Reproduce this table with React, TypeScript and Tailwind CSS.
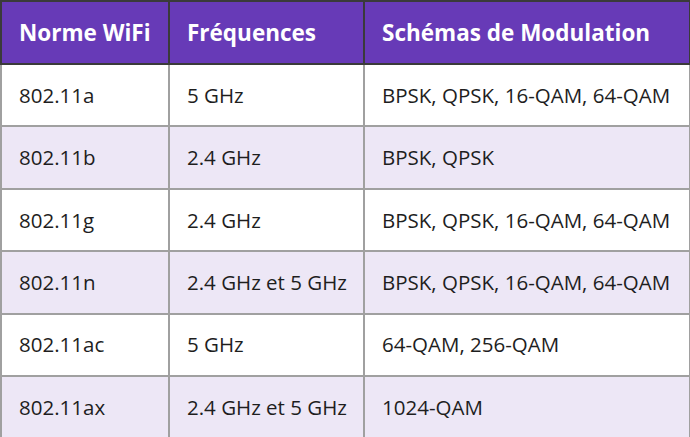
const rows = [
  ["802.11a", "5 GHz", "BPSK, QPSK, 16-QAM, 64-QAM"],
  ["802.11b", "2.4 GHz", "BPSK, QPSK"],
  ["802.11g", "2.4 GHz", "BPSK, QPSK, 16-QAM, 64-QAM"],
  ["802.11n", "2.4 GHz et 5 GHz", "BPSK, QPSK, 16-QAM, 64-QAM"],
  ["802.11ac", "5 GHz", "64-QAM, 256-QAM"],
  ["802.11ax", "2.4 GHz et 5 GHz", "1024-QAM"],
];

export default function App() {
  return (
    <div className="w-[690px] h-[437px] bg-white overflow-hidden font-['Open_Sans',sans-serif]">
      <table className="w-[691px] border-collapse table-fixed">
        <colgroup>
          <col className="w-[168px]" />
          <col className="w-[195px]" />
          <col />
        </colgroup>
        <thead>
          <tr className="h-[63px] bg-[#673ab7] text-white">
            {["Norme WiFi", "Fréquences", "Schémas de Modulation"].map((h) => (
              <th
                key={h}
                className="border-2 border-[#3a3a3a] px-[17px] text-left text-[22.5px] font-bold whitespace-nowrap"
              >
                {h}
              </th>
            ))}
          </tr>
        </thead>
        <tbody>
          {rows.map((r, i) => (
            <tr
              key={r[0]}
              className={`h-[62.4px] ${i % 2 === 1 ? "bg-[#ede7f6]" : "bg-white"}`}
            >
              {r.map((c, j) => (
                <td
                  key={j}
                  className="border-2 border-[#a0a0a0] px-[17px] text-[20.5px] text-[#1e1e1e] whitespace-nowrap"
                >
                  {c}
                </td>
              ))}
            </tr>
          ))}
        </tbody>
      </table>
    </div>
  );
}
